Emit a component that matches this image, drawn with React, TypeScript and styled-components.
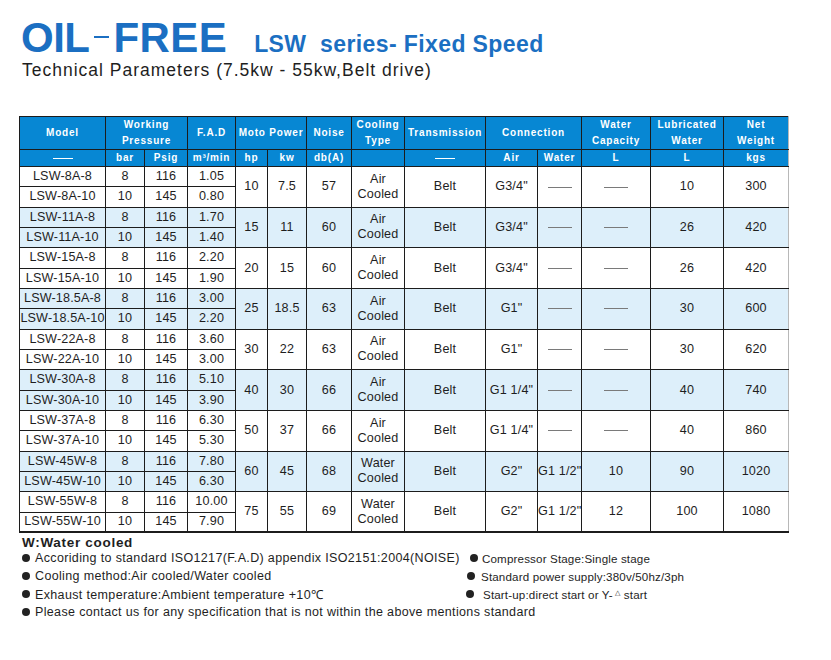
import React from "react";
import styled, { createGlobalStyle } from "styled-components";

const Global = createGlobalStyle`
  html, body { margin: 0; padding: 0; background: #ffffff; }
  body { font-family: "Liberation Sans", Arial, sans-serif; color: #222; }
`;

const BLUE_TITLE = "#1b6fc2";
const HEAD_BLUE = "#0787d3";
const ROW_BLUE = "#ddeffa";
const LINE = "#1c1c1c";

const Page = styled.div`
  width: 831px;
  height: 660px;
  padding: 17px 0 0 0;
  box-sizing: border-box;
  overflow: hidden;
`;

const TitleRow = styled.div`
  display: flex;
  align-items: baseline;
  padding-left: 21px;
  height: 42px;
`;

const BigTitle = styled.span`
  font-size: 42px;
  font-weight: 700;
  line-height: 42px;
  color: ${BLUE_TITLE};
`;

const TitleWord = styled.span<{ $spacing: number }>`
  letter-spacing: ${(p) => p.$spacing}px;
`;

const TitleDash = styled.span`
  display: inline-block;
  width: 15px;
  height: 2px;
  background: ${BLUE_TITLE};
  margin: 0 5px 0 4px;
  vertical-align: 14px;
`;

const SeriesTitle = styled.span`
  font-size: 23px;
  font-weight: 700;
  color: ${BLUE_TITLE};
  margin-left: 27px;
  letter-spacing: 0.4px;
  white-space: pre;
`;

const Subtitle = styled.div`
  padding-left: 22px;
  font-size: 17.5px;
  letter-spacing: 1px;
  line-height: 22px;
  color: #1e1e1e;
  margin-top: 0px;
`;

const Table = styled.table`
  margin: 35px 0 0 19px;
  width: 769px;
  border-collapse: collapse;
  table-layout: fixed;
  border-right: 1px solid #b8b8b8;
  border-bottom: 2px solid ${LINE};
`;

const HeadRow = styled.tr<{ $h: number }>`
  height: ${(p) => p.$h}px;
`;

const Th = styled.th`
  background: ${HEAD_BLUE};
  color: #ffffff;
  font-size: 10px;
  font-weight: 700;
  letter-spacing: 0.8px;
  line-height: 16px;
  padding: 0;
  text-align: center;
  vertical-align: middle;
  border: 1px solid ${LINE};
  white-space: nowrap;
  &:last-child { border-right-color: #b8b8b8; }
`;

const DataRow = styled.tr<{ $shade: boolean }>`
  height: 20.33px;
  background: ${(p) => (p.$shade ? ROW_BLUE : "#ffffff")};
`;

const Td = styled.td`
  font-size: 12.6px;
  letter-spacing: 0.15px;
  line-height: 15px;
  color: #1e1e1e;
  padding: 0;
  text-align: center;
  vertical-align: middle;
  border: 1px solid ${LINE};
  white-space: nowrap;
  &:last-child { border-right-color: #b8b8b8; }
`;

const Dash = styled.span<{ $light?: boolean }>`
  display: inline-block;
  width: ${(p) => (p.$light ? 20 : 24)}px;
  height: 1px;
  background: ${(p) => (p.$light ? "#ffffff" : "#7a7a7a")};
  vertical-align: middle;
`;

const Notes = styled.div`
  padding: 3px 0 0 22px;
  font-size: 12.5px;
  color: #1e1e1e;
`;

const NoteHead = styled.div`
  font-size: 13.5px;
  font-weight: 700;
  letter-spacing: 0.7px;
  line-height: 13px;
`;

const NoteGrid = styled.div`
  display: grid;
  grid-template-columns: 444px auto;
  row-gap: 0;
`;

const Note = styled.div<{ $indent?: number; $span?: boolean; $small?: boolean }>`
  display: flex;
  align-items: center;
  height: 18px;
  font-size: ${(p) => (p.$small ? 11.6 : 12.5)}px;
  letter-spacing: ${(p) => (p.$small ? 0.15 : 0.35)}px;
  padding-left: ${(p) => p.$indent ?? 0}px;
  ${(p) => (p.$span ? "grid-column: 1 / span 2;" : "")}
  white-space: nowrap;
`;

const Bullet = styled.span<{ $gap?: number }>`
  display: inline-block;
  width: 8px;
  height: 8px;
  border-radius: 50%;
  background: #222;
  margin-right: ${(p) => p.$gap ?? 5}px;
  flex: none;
`;

const Delta = styled.span`
  font-size: 7px;
  margin: 0 4px 0 2px;
  position: relative;
  top: -1px;
`;

const widths = [86, 39, 43, 48, 32, 39, 45, 53, 81, 52, 44, 69, 73, 65];

type Group = {
  models: [string, string];
  fad: [string, string];
  hp: string;
  kw: string;
  db: string;
  cool: string;
  air: string;
  water: string;
  cap: string;
  lub: string;
  net: string;
};

const groups: Group[] = [
  { models: ["LSW-8A-8", "LSW-8A-10"], fad: ["1.05", "0.80"], hp: "10", kw: "7.5", db: "57", cool: "Air", air: "G3/4\"", water: "", cap: "", lub: "10", net: "300" },
  { models: ["LSW-11A-8", "LSW-11A-10"], fad: ["1.70", "1.40"], hp: "15", kw: "11", db: "60", cool: "Air", air: "G3/4\"", water: "", cap: "", lub: "26", net: "420" },
  { models: ["LSW-15A-8", "LSW-15A-10"], fad: ["2.20", "1.90"], hp: "20", kw: "15", db: "60", cool: "Air", air: "G3/4\"", water: "", cap: "", lub: "26", net: "420" },
  { models: ["LSW-18.5A-8", "LSW-18.5A-10"], fad: ["3.00", "2.20"], hp: "25", kw: "18.5", db: "63", cool: "Air", air: "G1\"", water: "", cap: "", lub: "30", net: "600" },
  { models: ["LSW-22A-8", "LSW-22A-10"], fad: ["3.60", "3.00"], hp: "30", kw: "22", db: "63", cool: "Air", air: "G1\"", water: "", cap: "", lub: "30", net: "620" },
  { models: ["LSW-30A-8", "LSW-30A-10"], fad: ["5.10", "3.90"], hp: "40", kw: "30", db: "66", cool: "Air", air: "G1 1/4\"", water: "", cap: "", lub: "40", net: "740" },
  { models: ["LSW-37A-8", "LSW-37A-10"], fad: ["6.30", "5.30"], hp: "50", kw: "37", db: "66", cool: "Air", air: "G1 1/4\"", water: "", cap: "", lub: "40", net: "860" },
  { models: ["LSW-45W-8", "LSW-45W-10"], fad: ["7.80", "6.30"], hp: "60", kw: "45", db: "68", cool: "Water", air: "G2\"", water: "G1 1/2\"", cap: "10", lub: "90", net: "1020" },
  { models: ["LSW-55W-8", "LSW-55W-10"], fad: ["10.00", "7.90"], hp: "75", kw: "55", db: "69", cool: "Water", air: "G2\"", water: "G1 1/2\"", cap: "12", lub: "100", net: "1080" },
];

const orDash = (v: string) => (v ? v : <Dash />);

export default function App() {
  return (
    <Page>
      <Global />
      <TitleRow>
        <BigTitle>
          <TitleWord $spacing={-0.5}>OIL</TitleWord>
          <TitleDash />
          <TitleWord $spacing={0.4}>FREE</TitleWord>
        </BigTitle>
        <SeriesTitle>{"LSW  series- Fixed Speed"}</SeriesTitle>
      </TitleRow>
      <Subtitle>Technical Parameters (7.5kw - 55kw,Belt drive)</Subtitle>
      <Table>
        <colgroup>
          {widths.map((w, i) => (
            <col key={i} style={{ width: w }} />
          ))}
        </colgroup>
        <thead>
          <HeadRow $h={32}>
            <Th>Model</Th>
            <Th colSpan={2}>Working<br />Pressure</Th>
            <Th>F.A.D</Th>
            <Th colSpan={2}>Moto Power</Th>
            <Th>Noise</Th>
            <Th>Cooling<br />Type</Th>
            <Th>Transmission</Th>
            <Th colSpan={2}>Connection</Th>
            <Th>Water<br />Capacity</Th>
            <Th>Lubricated<br />Water</Th>
            <Th>Net<br />Weight</Th>
          </HeadRow>
          <HeadRow $h={16}>
            <Th><Dash $light /></Th>
            <Th>bar</Th>
            <Th>Psig</Th>
            <Th>m³/min</Th>
            <Th>hp</Th>
            <Th>kw</Th>
            <Th>db(A)</Th>
            <Th></Th>
            <Th><Dash $light /></Th>
            <Th>Air</Th>
            <Th>Water</Th>
            <Th>L</Th>
            <Th>L</Th>
            <Th>kgs</Th>
          </HeadRow>
        </thead>
        <tbody>
          {groups.map((g, gi) => {
            const shade = gi % 2 === 1;
            return (
              <React.Fragment key={gi}>
                <DataRow $shade={shade}>
                  <Td>{g.models[0]}</Td>
                  <Td>8</Td>
                  <Td>116</Td>
                  <Td>{g.fad[0]}</Td>
                  <Td rowSpan={2}>{g.hp}</Td>
                  <Td rowSpan={2}>{g.kw}</Td>
                  <Td rowSpan={2}>{g.db}</Td>
                  <Td rowSpan={2}>{g.cool}<br />Cooled</Td>
                  <Td rowSpan={2}>Belt</Td>
                  <Td rowSpan={2}>{g.air}</Td>
                  <Td rowSpan={2}>{orDash(g.water)}</Td>
                  <Td rowSpan={2}>{orDash(g.cap)}</Td>
                  <Td rowSpan={2}>{g.lub}</Td>
                  <Td rowSpan={2}>{g.net}</Td>
                </DataRow>
                <DataRow $shade={shade}>
                  <Td>{g.models[1]}</Td>
                  <Td>10</Td>
                  <Td>145</Td>
                  <Td>{g.fad[1]}</Td>
                </DataRow>
              </React.Fragment>
            );
          })}
        </tbody>
      </Table>
      <Notes>
        <NoteHead>W:Water cooled</NoteHead>
        <NoteGrid>
          <Note><Bullet />Accoriding to standard ISO1217(F.A.D) appendix ISO2151:2004(NOISE)</Note>
          <Note $small $indent={4}><Bullet $gap={4} />Compressor Stage:Single stage</Note>
          <Note><Bullet />Cooling method:Air cooled/Water cooled</Note>
          <Note $small $indent={1}><Bullet $gap={6} />Standard power supply:380v/50hz/3ph</Note>
          <Note><Bullet />Exhaust temperature:Ambient temperature +10℃</Note>
          <Note $small $indent={0}><Bullet $gap={9} />Start-up:direct start or Y-<Delta>△</Delta>start</Note>
          <Note $span><Bullet />Please contact us for any specification that is not within the above mentions standard</Note>
        </NoteGrid>
      </Notes>
    </Page>
  );
}
